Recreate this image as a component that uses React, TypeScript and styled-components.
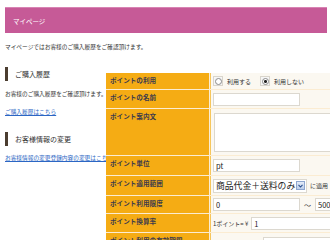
import styled, { createGlobalStyle } from 'styled-components';

const GlobalStyle = createGlobalStyle`
  body {
    margin: 0;
    background: #fff;
    font-family: "Noto Sans CJK JP", "Noto Sans", sans-serif;
    color: #333;
  }
`;

const Page = styled.div`
  position: relative;
  width: 330px;
  height: 240px;
  overflow: hidden;
  padding: 7px 3px 0 5px;
  box-sizing: border-box;
`;

const Banner = styled.header`
  height: 26px;
  background: #c65a97;
  border-top: 1px solid #d883b3;
  box-sizing: border-box;
  color: #fff;
  font-size: 6.5px;
  padding-left: 8px;
  display: flex;
  align-items: center;
`;

const Text = styled.p<{ $top: number }>`
  margin: ${({ $top }) => $top}px 0 0;
  font-size: 5.7px;
  line-height: 8px;
  white-space: nowrap;
`;

const LinkText = styled.a<{ $top: number }>`
  display: block;
  margin-top: ${({ $top }) => $top}px;
  font-size: 5.7px;
  line-height: 8px;
  color: #2b66c4;
  text-decoration: underline;
  white-space: nowrap;
`;

const SectionTitle = styled.h2<{ $top: number }>`
  margin: ${({ $top }) => $top}px 0 0;
  height: 14px;
  line-height: 14px;
  border-left: 3px solid #4b3d30;
  padding-left: 7px;
  font-size: 7px;
  font-weight: 400;
  color: #333;
`;

/* settings popup lying over the page */
const Panel = styled.section`
  position: absolute;
  left: 106px;
  top: 73px;
  width: 250px;
  display: grid;
  grid-template-columns: 103px 1fr;
  grid-template-rows: 16px 18px 46px 19px 19px 17px 18px 22px;
  column-gap: 1px;
  row-gap: 1px;
  background: #fbecd2;
`;

const Label = styled.div`
  background: #f5ac14;
  padding: 3px 4px 0;
  font-size: 6.6px;
  line-height: 8px;
  font-weight: 700;
  color: #3d3b4c;
  white-space: nowrap;
`;

const Field = styled.div<{ $top?: boolean }>`
  background: #fbf8f1;
  border-left: 1px solid #f6c65c;
  padding: ${({ $top }) => ($top ? '4px 0 0 3px' : '0 0 0 2px')};
  display: flex;
  align-items: ${({ $top }) => ($top ? 'flex-start' : 'center')};
  gap: 3px;
  font-size: 6px;
  color: #333;
  white-space: nowrap;
  overflow: hidden;
`;

const RadioOption = styled.label`
  display: flex;
  align-items: center;
  gap: 4px;
  margin-right: 6px;
  font-size: 6px;
`;

const RadioBox = styled.span<{ $checked?: boolean }>`
  width: 8px;
  height: 8px;
  border: 1px solid #d9d5cc;
  background: #f6f6f6;
  display: grid;
  place-items: center;

  &::after {
    content: '';
    width: 5px;
    height: 5px;
    border-radius: 50%;
    border: 1px solid #8a8a8a;
    background: ${({ $checked }) =>
      $checked ? 'radial-gradient(circle, #222 0 1.3px, #fff 1.6px)' : '#fff'};
  }
`;

const TextBox = styled.div<{ $w: number }>`
  width: ${({ $w }) => $w}px;
  height: 13px;
  flex-shrink: 0;
  background: #fff;
  border: 1px solid #dcd8cf;
  box-sizing: border-box;
  padding-left: 2px;
  font-size: 7.5px;
  line-height: 11px;
  color: #222;
`;

const TextArea = styled.div`
  width: 150px;
  height: 39px;
  flex-shrink: 0;
  background: #fff;
  border: 1px solid #dcd8cf;
  box-sizing: border-box;
`;

const Select = styled.div`
  width: 94px;
  height: 14px;
  flex-shrink: 0;
  display: flex;
  align-items: center;
  justify-content: space-between;
  background: #fff;
  border: 1px solid #dcd8cf;
  box-sizing: border-box;
  padding: 0 1px 0 2px;
  font-size: 8.8px;
  color: #222;
`;

const SelectButton = styled.span`
  width: 9px;
  height: 9px;
  border: 1px solid #8ea6cf;
  background: linear-gradient(#e4ecf8, #bccde9);
  box-sizing: border-box;
  display: grid;
  place-items: center;
`;

const Tilde = styled.span`
  font-size: 7px;
  margin: 0 1px;
`;

export default function App() {
  return (
    <>
      <GlobalStyle />
      <Page>
        <Banner>マイページ</Banner>
        <Text $top={10}>マイページではお客様のご購入履歴をご確認頂けます。</Text>

        <SectionTitle $top={16}>ご購入履歴</SectionTitle>
        <Text $top={9}>お客様のご購入履歴をご確認頂けます。</Text>
        <LinkText $top={10} href="#">ご購入履歴はこちら</LinkText>

        <SectionTitle $top={16}>お客様情報の変更</SectionTitle>
        <LinkText $top={8} href="#">お客様情報の変更登録内容の変更はこちら</LinkText>

        <Panel>
          <Label>ポイントの利用</Label>
          <Field>
            <RadioOption><RadioBox />利用する</RadioOption>
            <RadioOption><RadioBox $checked />利用しない</RadioOption>
          </Field>

          <Label>ポイントの名前</Label>
          <Field><TextBox $w={87} /></Field>

          <Label>ポイント案内文</Label>
          <Field $top><TextArea /></Field>

          <Label>ポイント単位</Label>
          <Field><TextBox $w={87}>pt</TextBox></Field>

          <Label>ポイント適用範囲</Label>
          <Field>
            <Select>
              商品代金＋送料のみ
              <SelectButton>
                <svg width="5" height="4" viewBox="0 0 5 4">
                  <path d="M0.5 0.8 L2.5 3 L4.5 0.8" fill="none" stroke="#2a4f8f" strokeWidth="1.1" />
                </svg>
              </SelectButton>
            </Select>
            <span>に適用</span>
          </Field>

          <Label>ポイント利用限度</Label>
          <Field>
            <TextBox $w={87}>0</TextBox>
            <Tilde>～</Tilde>
            <TextBox $w={87}>5000</TextBox>
          </Field>

          <Label>ポイント換算率</Label>
          <Field>
            <span>1ポイント= ¥</span>
            <TextBox $w={87}>1</TextBox>
          </Field>

          <Label>ポイント利用の有効期限</Label>
          <Field $top>
            <span style={{ width: 46 }} />
            <TextBox $w={87} />
          </Field>
        </Panel>
      </Page>
    </>
  );
}
